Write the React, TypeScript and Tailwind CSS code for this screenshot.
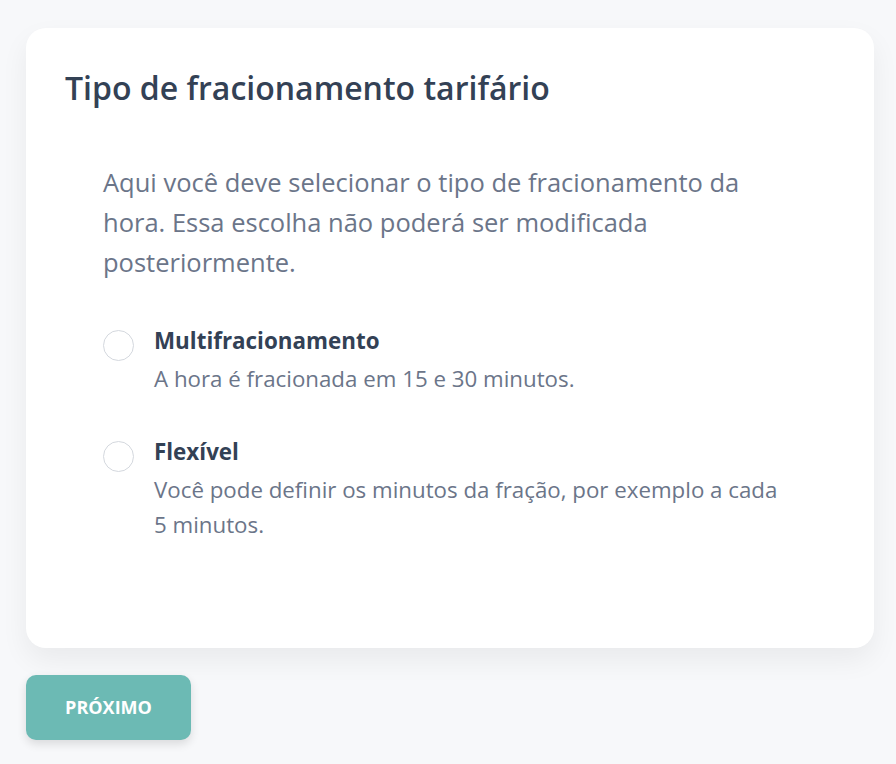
export default function App() {
  const options = [
    {
      title: "Multifracionamento",
      desc: "A hora é fracionada em 15 e 30 minutos.",
    },
    {
      title: "Flexível",
      desc: "Você pode definir os minutos da fração, por exemplo a cada 5 minutos.",
    },
  ];

  return (
    <div
      className="min-h-[764px] w-[896px] bg-[#f7f8fa] pl-[26px] pt-[28px]"
      style={{ fontFamily: '"Open Sans", "Noto Sans", sans-serif' }}
    >
      <div className="h-[620px] w-[848px] rounded-[20px] bg-white px-[39px] pt-[40px] shadow-[0_12px_28px_rgba(0,0,0,0.06)]">
        <h1 className="text-[32px] font-semibold leading-[40px] text-[#334155]">
          Tipo de fracionamento tarifário
        </h1>
        <div className="pl-[38px] pt-[54px]">
          <p className="max-w-[670px] text-[25.5px] leading-[40px] text-[#6b7589]">
            Aqui você deve selecionar o tipo de fracionamento da hora. Essa escolha não poderá ser modificada posteriormente.
          </p>
          <div className="mt-[43px] flex flex-col gap-[40px]">
            {options.map((o) => (
              <label key={o.title} className="flex gap-[20px]">
                <span className="mt-[5px] h-[31px] w-[31px] shrink-0 rounded-full border border-[#d4d8de] bg-white" />
                <span className="flex flex-col">
                  <span className="text-[22.4px] font-bold leading-[32px] text-[#334155]">
                    {o.title}
                  </span>
                  <span className="mt-[4px] max-w-[638px] text-[22.3px] leading-[35px] text-[#6b7589]">
                    {o.desc}
                  </span>
                </span>
              </label>
            ))}
          </div>
        </div>
      </div>
      <button className="mt-[27px] h-[65px] w-[165px] rounded-[10px] bg-[#6cbab4] text-[18px] font-bold text-white shadow-[0_4px_10px_rgba(0,0,0,0.12)]">
        PRÓXIMO
      </button>
    </div>
  );
}
